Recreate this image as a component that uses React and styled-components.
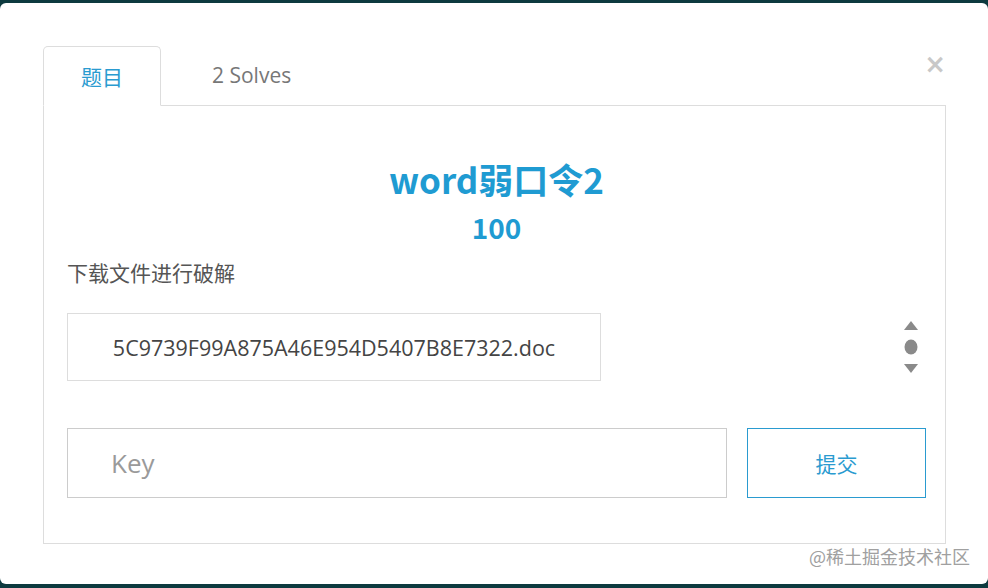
import React from 'react';
import styled, { createGlobalStyle } from 'styled-components';

const GlobalStyle = createGlobalStyle`
    html, body {
        margin: 0;
        padding: 0;
        background: #0d3a3f;
    }
    body {
        font-family: "Open Sans", "Noto Sans CJK SC", sans-serif;
    }
`;

const Page = styled.div`
    height: 588px;
    padding: 3px 0 4px;
    box-sizing: border-box;
`;

const Modal = styled.div`
    position: relative;
    height: 100%;
    background: #fff;
    border-radius: 6px;
    padding: 42px 42px 0 43px;
    box-sizing: border-box;
`;

const TabBar = styled.div`
    display: flex;
    align-items: flex-end;
    border-bottom: 1px solid #dddddd;
    height: 60px;
`;

const Tab = styled.div`
    height: 60px;
    box-sizing: border-box;
    display: flex;
    align-items: center;
    padding: 0 ${p => (p.active ? '37px' : '0')} 0 ${p => (p.active ? '37px' : '50px')};
    margin-bottom: ${p => (p.active ? '-1px' : '0')};
    font-size: 21px;
    color: ${p => (p.active ? '#2a9bd0' : '#777')};
    background: ${p => (p.active ? '#fff' : 'transparent')};
    border: 1px solid ${p => (p.active ? '#dddddd' : 'transparent')};
    border-bottom-color: ${p => (p.active ? '#fff' : 'transparent')};
    border-radius: 5px 5px 0 0;
`;

const Close = styled.div`
    position: absolute;
    top: 48px;
    right: 42px;
    font-family: "DejaVu Sans", sans-serif;
    font-size: 26px;
    font-weight: bold;
    color: #c8c8c8;
    line-height: 26px;
`;

const Panel = styled.div`
    border: 1px solid #dddddd;
    border-top: none;
    padding: 52px 19px 45px 23px;
`;

const Title = styled.h2`
    margin: 0;
    text-align: center;
    font-family: "Noto Sans CJK SC", "Open Sans", sans-serif;
    font-size: 35px;
    line-height: 42px;
    font-weight: 600;
    color: #1f9bd2;
`;

const Score = styled.div`
    margin-top: 10px;
    text-align: center;
    font-family: "Noto Sans CJK SC", sans-serif;
    font-size: 28px;
    line-height: 34px;
    font-weight: 600;
    color: #1f9bd2;
`;

const Desc = styled.p`
    margin: 14px 0 0;
    font-family: "Noto Sans CJK SC", sans-serif;
    font-size: 21px;
    line-height: 28px;
    color: #555;
`;

const FileRow = styled.div`
    display: flex;
    align-items: center;
    justify-content: space-between;
    margin-top: 27px;
    padding-right: 7px;
`;

const FileBox = styled.div`
    width: 534px;
    height: 68px;
    box-sizing: border-box;
    border: 1px solid #dddddd;
    display: flex;
    align-items: center;
    justify-content: center;
    font-size: 21.5px;
    color: #444;
`;

const Form = styled.div`
    display: flex;
    gap: 20px;
    margin-top: 47px;
`;

const KeyInput = styled.input`
    width: 661px;
    height: 70px;
    box-sizing: border-box;
    border: 1px solid #cccccc;
    padding: 0 43px;
    font-family: "Open Sans", sans-serif;
    font-size: 26px;
    color: #444;
    outline: none;
    &::placeholder {
        color: #9a9a9a;
    }
`;

const Submit = styled.button`
    width: 179px;
    height: 70px;
    box-sizing: border-box;
    background: #fff;
    border: 1px solid #2a9bd0;
    font-family: "Noto Sans CJK SC", sans-serif;
    font-size: 21px;
    color: #2a9bd0;
`;

const Watermark = styled.div`
    position: absolute;
    right: 18px;
    bottom: 15px;
    font-family: "Noto Sans CJK SC", sans-serif;
    font-size: 18px;
    color: #a0a0a0;
`;

const Spinner = () => (
    <svg width="16" height="56" viewBox="0 0 16 56">
        <polygon points="8,2 15,11 1,11" fill="#8a8a8a" />
        <ellipse cx="8" cy="28" rx="6.5" ry="7.5" fill="#8a8a8a" />
        <polygon points="1,45 15,45 8,54" fill="#8a8a8a" />
    </svg>
);

export default function App() {
    return (
        <Page>
            <GlobalStyle />
            <Modal>
                <Close>×</Close>
                <TabBar>
                    <Tab active>题目</Tab>
                    <Tab>2 Solves</Tab>
                </TabBar>
                <Panel>
                    <Title>word弱口令2</Title>
                    <Score>100</Score>
                    <Desc>下载文件进行破解</Desc>
                    <FileRow>
                        <FileBox>5C9739F99A875A46E954D5407B8E7322.doc</FileBox>
                        <Spinner />
                    </FileRow>
                    <Form>
                        <KeyInput placeholder="Key" />
                        <Submit>提交</Submit>
                    </Form>
                </Panel>
                <Watermark>@稀土掘金技术社区</Watermark>
            </Modal>
        </Page>
    );
}
